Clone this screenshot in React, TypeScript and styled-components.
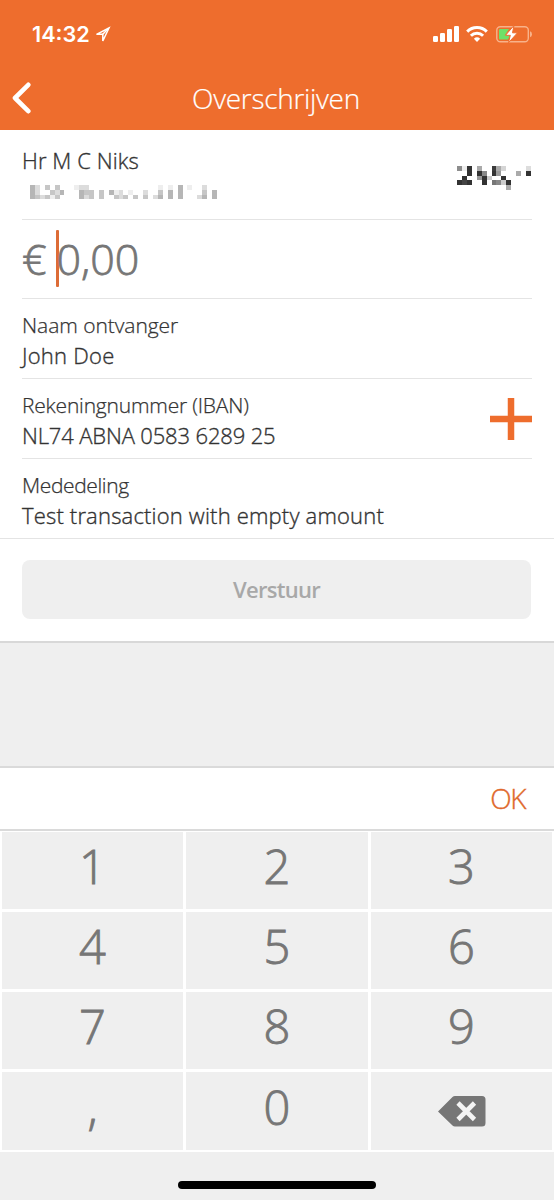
import React from 'react';
import styled, { createGlobalStyle } from 'styled-components';

const Global = createGlobalStyle`
  * { box-sizing: border-box; }
  body { margin: 0; background: #efefef; font-family: 'Open Sans', 'Noto Sans', sans-serif; color: #333; }
  button { border: 0; padding: 0; background: none; font: inherit; color: inherit; display: block; }
  svg { display: block; }
`;

const Screen = styled.div`
  width: 554px;
  height: 1200px;
  display: flex;
  flex-direction: column;
  background: #efefef;
  overflow: hidden;
`;

const Header = styled.header`
  height: 130px;
  background: #ee6d2d;
  color: #fff;
`;

const StatusBar = styled.div`
  height: 66px;
  padding: 2px 22px 0 32px;
  display: flex;
  align-items: center;
  justify-content: space-between;
`;

const Clock = styled.span`
  display: flex;
  align-items: center;
  gap: 5px;
  font: 600 21.7px/26px Inter, sans-serif;
`;

const NavBar = styled.div`
  height: 64px;
  display: grid;
  grid-template-columns: 60px 1fr 60px;
  align-items: center;
`;

const BackButton = styled.button`
  justify-self: start;
  padding: 0 0 1px 10px;
`;

const Text = styled.span<{ $size: number; $line: number; $weight?: number; $track?: number; $stroke?: number }>`
  display: block;
  white-space: nowrap;
  font-size: ${p => p.$size}px;
  line-height: ${p => p.$line}px;
  font-weight: ${p => p.$weight ?? 300};
  letter-spacing: ${p => p.$track ?? 0}px;
  -webkit-text-stroke: ${p => p.$stroke ?? 0.35}px currentColor;
`;

const Title = styled(Text)`
  text-align: center;
  padding-right: 2px;
`;

const Card = styled.main`
  height: 513px;
  background: #fff;
  border-bottom: 2px solid #d8d8d8;
`;

const Row = styled.section<{ $height: number; $last?: boolean }>`
  height: ${p => p.$height}px;
  margin: 0 ${p => (p.$last ? 0 : 22)}px;
  padding: 0 ${p => (p.$last ? 22 : 0)}px;
  border-bottom: 1px solid #e4e4e4;
  display: flex;
  justify-content: space-between;
`;

const AccountInfo = styled.div`
  padding-top: 16px;
`;

const MaskedIban = styled.svg`
  margin: 11px 0 0 8px;
`;

const Field = styled.div`
  padding-top: 11px;
`;

const Balance = styled.div`
  padding-top: 36px;
`;

const Amount = styled.div`
  display: flex;
  align-items: center;
  color: #767676;
`;

const Caret = styled.i`
  width: 3px;
  height: 57px;
  border-radius: 1px;
  background: #dd6c36;
  margin: 0 -2px 2px 9px;
`;

const AddButton = styled.button`
  align-self: center;
`;

const Submit = styled.button`
  width: 509px;
  height: 59px;
  margin: 21px 0 0 22px;
  border-radius: 8px;
  background: #efefef;
  color: #a8a8a8;
  text-align: center;
`;

const Toolbar = styled.div`
  margin-top: 123px;
  height: 65px;
  border-top: 2px solid #dadada;
  border-bottom: 2px solid #dadada;
  background: #fff;
  color: #e0682b;
  display: flex;
  justify-content: flex-end;
  align-items: center;
  padding: 0 29px 2px 0;
`;

const Keypad = styled.div`
  height: 321px;
  padding: 1px 2px 2px;
  background: #fff;
  display: grid;
  grid-template-columns: 181px 182px 181px;
  grid-template-rows: 77px 77px 77px 78px;
  gap: 3px;
`;

const Key = styled.button`
  background: #efefef;
  color: #767676;
  display: flex;
  align-items: center;
  justify-content: center;
`;

const Digit = styled(Text)`
  padding-bottom: 9px;
`;

const HomeArea = styled.footer`
  flex: 1;
  display: flex;
  justify-content: center;
  padding-top: 29px;
`;

const HomeBar = styled.div`
  width: 198px;
  height: 8px;
  border-radius: 4px;
  background: #000;
`;

const shades: Record<string, string> = { a: '#b6b6b6', b: '#c6c6c6', c: '#dcdcdc', d: '#eeeeee' };

const ibanCells = [
  'ac.b.b...dcc..............d.d.a.d..c..',
  'ac..bca...abb.b.adc.d..c..b.a.a....b.a',
  'abcbdb....acb.b..bcb.b.b.ca.a.a...ca.a',
];

const balanceCells: [number, number, string][] = [
  [0, 0, '#8d8d8d'], [1, 0, '#eee'], [2, 0, '#333'], [4, 0, '#aaa'], [7, 0, '#3c3c3c'], [8, 0, '#aaa'], [9, 0, '#d5d5d5'], [14, 0, '#ddd'],
  [2, 1, '#333'], [4, 1, '#333'], [5, 1, '#888'], [7, 1, '#333'], [8, 1, '#999'], [12, 1, '#aaa'], [14, 1, '#333'],
  [1, 2, '#333'], [4, 2, '#999'], [5, 2, '#333'], [6, 2, '#ccc'], [9, 2, '#333'],
  [0, 3, '#333'], [1, 3, '#444'], [2, 3, '#333'], [5, 3, '#333'], [7, 3, '#777'], [8, 3, '#888'], [9, 3, '#ccc'], [10, 3, '#333'],
  [10, 4, '#aaa'],
];

const keys = ['1', '2', '3', '4', '5', '6', '7', '8', '9', ',', '0'];

export default function App() {
  return (
    <Screen>
      <Global />
      <Header>
        <StatusBar>
          <Clock>
            14:32
            <svg width="16" height="17" viewBox="0 0 16 17" fill="none" stroke="#fff" strokeWidth="1.5">
              <path d="M14 2 1.500 8.300H7.800V15Z" />
              <path d="M13.500 2.300 7.800 8.300" />
            </svg>
          </Clock>
          <svg width="100" height="20" viewBox="0 0 100 20" fill="#fff">
            <rect x="1" y="12" width="5" height="6" rx="1.3" />
            <rect x="8" y="9" width="5" height="9" rx="1.3" />
            <rect x="15" y="5" width="5" height="13" rx="1.3" />
            <rect x="22" y="2" width="5" height="16" rx="1.3" />
            <g fill="none" stroke="#fff" strokeWidth="3">
              <path d="M35.200 7.600A14 14 0 0 1 54.800 7.600" />
              <path d="M38.900 11.700A8.600 8.600 0 0 1 51.100 11.700" />
            </g>
            <path d="M41.900 14.700A4.600 4.600 0 0 1 48.100 14.700L45 17.900Z" />
            <rect x="64.800" y="2.800" width="31.500" height="15" rx="3.500" fill="none" stroke="#f8b28a" strokeWidth="1.400" />
            <path d="M98 7.300Q100 8 100 10.300T98 13.300Z" fill="#f8b28a" />
            <path d="M68 5H77L73 11H78L76 15.500H68Q67 15.500 67 14.500V6Q67 5 68 5Z" fill="#6fe068" />
            <path d="M82 1.500 73.500 11.300H78.300L76.500 18.700 85.500 8.800H80.500Z" stroke="#ee6d2d" strokeWidth="1" />
          </svg>
        </StatusBar>
        <NavBar>
          <BackButton aria-label="Terug">
            <svg width="22" height="32" viewBox="0 0 22 32" fill="none" stroke="#fff" strokeWidth="4.600" strokeLinecap="round" strokeLinejoin="round">
              <path d="M18.300 2.800 5 16 18.300 29.200" />
            </svg>
          </BackButton>
          <Title $size={28} $line={36} $track={-0.3} $stroke={0.2}>Overschrijven</Title>
        </NavBar>
      </Header>
      <Card>
        <Row $height={90}>
          <AccountInfo>
            <Text $size={22} $line={28} $track={0.08}>Hr M C Niks</Text>
            <MaskedIban width="190" height="15" shapeRendering="crispEdges">
              {ibanCells.map((line, y) =>
                [...line].map((c, x) =>
                  c === '.' ? null : <rect key={`${x}-${y}`} x={x * 4.92} y={y * 4.8} width="4.92" height="4.8" fill={shades[c]} />,
                ),
              )}
            </MaskedIban>
          </AccountInfo>
          <Balance>
            <svg width="75" height="26" shapeRendering="crispEdges">
              {balanceCells.map(([x, y, fill]) => (
                <rect key={`${x}-${y}`} x={x * 4.93} y={y * 4.8} width="4.93" height="4.8" fill={fill} />
              ))}
            </svg>
          </Balance>
        </Row>
        <Row $height={79}>
          <Amount>
            <Text $size={43} $line={60} $stroke={0.8}>€</Text>
            <Caret />
            <Text $size={43} $line={60} $stroke={0.8}>0,00</Text>
          </Amount>
        </Row>
        <Row $height={80}>
          <Field>
            <Text $size={21} $line={30} $track={-0.05} $stroke={0.25}>Naam ontvanger</Text>
            <Text $size={22} $line={30} $track={0.25}>John Doe</Text>
          </Field>
        </Row>
        <Row $height={80}>
          <Field>
            <Text $size={21} $line={30} $track={-0.2} $stroke={0.25}>Rekeningnummer (IBAN)</Text>
            <Text $size={22} $line={30} $track={-0.15}>NL74 ABNA 0583 6289 25</Text>
          </Field>
          <AddButton aria-label="Toevoegen">
            <svg width="42" height="42"><path d="M21 0v42M0 21h42" stroke="#ee6d2d" strokeWidth="6.500" /></svg>
          </AddButton>
        </Row>
        <Row $height={80} $last>
          <Field>
            <Text $size={21} $line={30} $track={-0.38} $stroke={0.25}>Mededeling</Text>
            <Text $size={22} $line={30} $track={0.18}>Test transaction with empty amount</Text>
          </Field>
        </Row>
        <Submit><Text $size={22} $line={59} $weight={600} $track={-0.7} $stroke={0}>Verstuur</Text></Submit>
      </Card>
      <Toolbar><Text $size={28} $line={40} $track={-1.5}>OK</Text></Toolbar>
      <Keypad>
        {keys.map(k => <Key key={k}><Digit $size={47} $line={60} $stroke={0.9}>{k}</Digit></Key>)}
        <Key aria-label="Wissen">
          <svg width="48" height="31" viewBox="0 0 48 31">
            <path d="M0 15.5 14.5 1Q15.5 0 17 0H44Q47.500 0 47.500 3.500V27Q47.500 30.500 44 30.500H17Q15.500 30.500 14.500 29.500Z" fill="#767676" />
            <path d="m20 7 16.500 16.500M36.500 7 20 23.500" stroke="#f4f4f4" strokeWidth="4.600" />
          </svg>
        </Key>
      </Keypad>
      <HomeArea><HomeBar /></HomeArea>
    </Screen>
  );
}
